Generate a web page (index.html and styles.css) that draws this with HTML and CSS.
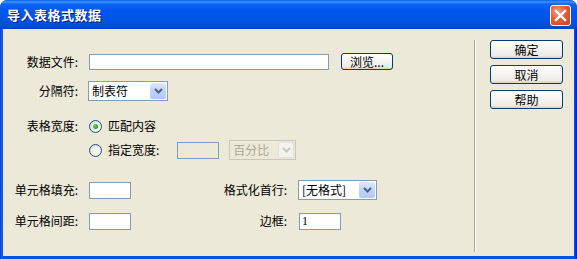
FILE: index.html
```html
<!DOCTYPE html>
<html lang="zh-CN">
<head>
    <meta charset="UTF-8">
    <title>导入表格式数据</title>
    <link rel="stylesheet" href="styles.css">
</head>
<body>
    <div class="window">
        <div class="titlebar">
            <span class="title">导入表格式数据</span>
            <span class="close">
                <svg width="13" height="13" viewBox="0 0 13 13">
                    <path d="M2 2 L11 11 M11 2 L2 11" stroke="#fff" stroke-width="2.4" stroke-linecap="square"/>
                </svg>
            </span>
        </div>
        <div class="client">
            <div class="form">
                <div class="row row-file">
                    <span class="label">数据文件:</span>
                    <span class="field field-file"></span>
                    <button class="btn btn-browse">浏览...</button>
                </div>
                <div class="row row-sep">
                    <span class="label">分隔符:</span>
                    <div class="combo combo-sep">
                        <span class="combo-text">制表符</span>
                        <span class="combo-arrow">
                            <svg width="9" height="6" viewBox="0 0 9 6"><path d="M1 1 L4.5 4.5 L8 1" fill="none" stroke="#4D6185" stroke-width="2"/></svg>
                        </span>
                    </div>
                </div>
                <div class="row row-width">
                    <span class="label">表格宽度:</span>
                    <label class="radio"><span class="radio-dot checked"></span>匹配内容</label>
                </div>
                <div class="row row-custom">
                    <span class="label"></span>
                    <label class="radio"><span class="radio-dot"></span>指定宽度:</label>
                    <span class="field field-small field-width"></span>
                    <div class="combo combo-unit disabled">
                        <span class="combo-text">百分比</span>
                        <span class="combo-arrow">
                            <svg width="9" height="6" viewBox="0 0 9 6"><path d="M1 1 L4.5 4.5 L8 1" fill="none" stroke="#C9C7BA" stroke-width="2"/></svg>
                        </span>
                    </div>
                </div>
                <div class="row row-pad">
                    <span class="label">单元格填充:</span>
                    <span class="field field-small"></span>
                    <span class="label label-wide">格式化首行:</span>
                    <div class="combo combo-format">
                        <span class="combo-text">[无格式]</span>
                        <span class="combo-arrow">
                            <svg width="9" height="6" viewBox="0 0 9 6"><path d="M1 1 L4.5 4.5 L8 1" fill="none" stroke="#4D6185" stroke-width="2"/></svg>
                        </span>
                    </div>
                </div>
                <div class="row row-space">
                    <span class="label">单元格间距:</span>
                    <span class="field field-small"></span>
                    <span class="label label-wide">边框:</span>
                    <span class="field field-small field-border">1</span>
                </div>
            </div>
            <div class="divider"></div>
            <div class="actions">
                <button class="btn">确定</button>
                <button class="btn">取消</button>
                <button class="btn">帮助</button>
            </div>
        </div>
    </div>
</body>
</html>
```

FILE: styles.css
```css
body {
    margin: 0;
    padding: 0;
    font-family: "Noto Sans CJK SC", "Liberation Sans", sans-serif;
    font-size: 12px;
    color: #000;
}
.window {
    width: 577px;
    height: 259px;
    box-sizing: border-box;
    display: flex;
    flex-direction: column;
    padding: 0 3px 3px 3px;
    background: linear-gradient(to right, #0831D9 0, #166AEE 2px, #0055E5 3px, #0055E5 574px, #0019CF 100%);
    border-radius: 7px 7px 0 0;
    overflow: hidden;
}
.titlebar {
    height: 29px;
    margin: 0 -3px;
    padding: 0 6px 0 7px;
    display: flex;
    align-items: center;
    justify-content: space-between;
    background: linear-gradient(to bottom, #0A5FE6 0, #3D95FF 2px, #0A66F0 4px, #0058EE 10px, #0054E3 20px, #0050D8 26px, #003DD7 29px);
    border-radius: 7px 7px 0 0;
}
.title {
    color: #fff;
    font-weight: bold;
    font-size: 13px;
    line-height: 16px;
    letter-spacing: 0.5px;
    text-shadow: 1px 1px 0 #0A1883;
    margin-top: 1px;
}
.close {
    width: 21px;
    height: 21px;
    box-sizing: border-box;
    margin-top: 2px;
    border: 1px solid #fff;
    border-radius: 3px;
    background: radial-gradient(circle at 35% 30%, #F49E86 0, #E55C37 45%, #CC4520 100%);
    display: flex;
    align-items: center;
    justify-content: center;
}
.client {
    flex: 1;
    display: flex;
    background: #ECE9D8;
}
.form {
    width: 471px;
    padding-top: 23px;
}
.row {
    display: flex;
    align-items: center;
    height: 20px;
    gap: 8px;
}
.row-sep { margin-top: 9px; }
.row-width { margin-top: 15px; }
.row-custom { margin-top: 4px; }
.row-pad { margin-top: 20px; }
.row-space { margin-top: 11px; }
.label {
    width: 78px;
    box-sizing: border-box;
    padding-right: 3px;
    flex: none;
    text-align: right;
    line-height: 16px;
    white-space: nowrap;
}
.label-wide {
    width: 151px;
}
.field {
    box-sizing: border-box;
    height: 16px;
    border: 1px solid #7F9DB9;
    background: #fff;
    line-height: 14px;
    padding-left: 2px;
    font-size: 12px;
}
.field-file {
    width: 240px;
}
.field-small {
    width: 42px;
    height: 17px;
}
.field-width {
    margin-left: 10px;
    background: #ECE9D8;
}
.field-border {
    margin-left: 1px;
    font-family: "Liberation Serif", serif;
}
.btn {
    box-sizing: border-box;
    width: 73px;
    height: 19px;
    padding: 0;
    border: 1px solid #003C74;
    border-radius: 3px;
    background: linear-gradient(to bottom, #fff 0, #F4F3EE 50%, #ECEBE6 85%, #D6D0C5 100%);
    font-family: inherit;
    font-size: 12px;
    line-height: 15px;
    color: #000;
}
.btn-browse {
    width: 52px;
    height: 17px;
    margin-left: 4px;
    margin-top: -2px;
}
.combo {
    box-sizing: border-box;
    height: 20px;
    border: 1px solid #7F9DB9;
    background: #fff;
    display: flex;
    align-items: center;
    justify-content: space-between;
    padding: 0 1px 0 3px;
}
.combo-sep {
    width: 80px;
    margin-left: -1px;
}
.combo-unit {
    width: 67px;
    margin-left: 2px;
}
.combo-format {
    width: 79px;
}
.combo-text {
    line-height: 16px;
    white-space: nowrap;
}
.combo-arrow {
    width: 16px;
    height: 16px;
    box-sizing: border-box;
    border-radius: 2px;
    background: linear-gradient(to bottom, #E0E9FD 0, #C1D3FB 50%, #B4C8F6 100%);
    display: flex;
    align-items: center;
    justify-content: center;
}
.combo.disabled {
    border-color: #C9C7BA;
    background: #ECE9D8;
    color: #ACA899;
}
.combo.disabled .combo-arrow {
    background: #F3F3EE;
    border: 1px solid #E1E0D9;
}
.radio {
    display: flex;
    align-items: center;
    gap: 6px;
    line-height: 16px;
    white-space: nowrap;
}
.radio-dot {
    width: 13px;
    height: 13px;
    box-sizing: border-box;
    border: 1px solid #1C5180;
    border-radius: 50%;
    background: radial-gradient(circle at 60% 60%, #fff 0, #F2F1EC 40%, #D4D3CC 100%);
    display: flex;
    align-items: center;
    justify-content: center;
}
.radio-dot.checked::after {
    content: "";
    width: 5px;
    height: 5px;
    border-radius: 50%;
    background: radial-gradient(circle at 35% 35%, #5EDB5E 0, #21A121 70%);
}
.divider {
    width: 1px;
    margin: 11px 0 4px 0;
    background: #ACA899;
    border-right: 1px solid #fff;
}
.actions {
    display: flex;
    flex-direction: column;
    gap: 6px;
    padding: 11px 0 0 14px;
}
```
